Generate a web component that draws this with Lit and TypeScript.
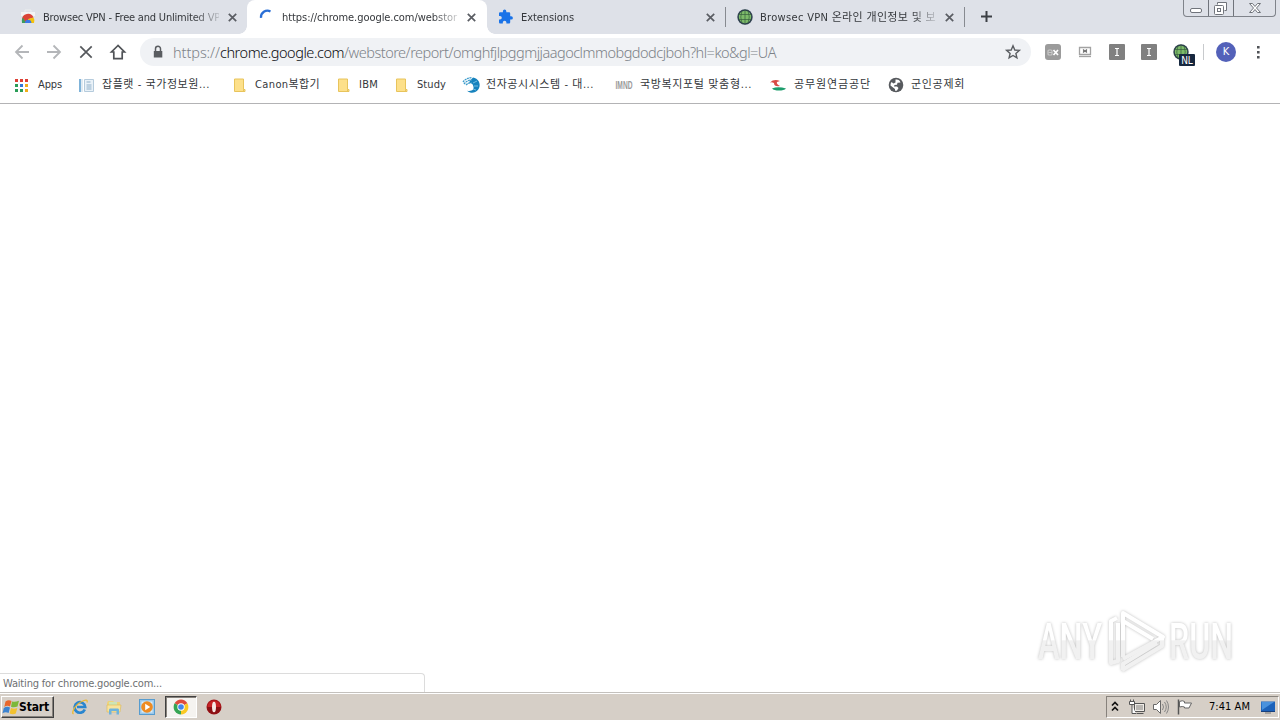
import { LitElement, css, html, svg } from 'lit'
import { customElement, property } from 'lit/decorators.js'

const glyphs: Record<string, unknown> = {
  store: svg`
    <path d="M1 3h14v4H1z" fill="#f3f4f5"/>
    <path d="M5 3V1h6v2" fill="none" stroke="#eceeef" stroke-width="1"/>
    <path d="M2 14V11a6 6 0 0 1 11.500-2.500L8 10.500V14z" fill="#db4437"/>
    <path d="M8 10l5.500-1.500A6 6 0 0 1 14 14H9z" fill="#f4c20d"/>
    <path d="M2 14l-.2-3A6 6 0 0 1 3 8.500L6 14z" fill="#3e9d5b"/>
    <path d="M5 14a3.200 3.200 0 0 1 6.400 0z" fill="#3b78e7"/>`,
  spinner: svg`<path d="M2 8.800A6.500 6.500 0 0 1 11.500 2.400" fill="none" stroke="#2a6fd6" stroke-width="2.300"/>`,
  puzzle: svg`<path fill="#1a73e8" d="M13.200 7.200h-1V4.500c0-.8-.6-1.300-1.300-1.300H8.300v-.9a1.700 1.700 0 0 0-3.400 0v.9H2.300C1.600 3.200 1 3.700 1 4.500V7h1a1.800 1.800 0 0 1 0 3.600H1v2.600c0 .7.600 1.300 1.300 1.300h2.500v-1a1.800 1.800 0 0 1 3.600 0v1h2.500c.7 0 1.300-.6 1.300-1.300v-2.600h1a1.700 1.700 0 0 0 0-3.400z"/>`,
  globe: svg`
    <circle cx="8" cy="8" r="7.700" fill="#2b3d4c"/>
    <circle cx="8" cy="8" r="6.200" fill="#7dbb69"/>
    <path d="M1.500 5.500h13M1.500 10.500h13M8 .5v15M5 1.500Q2.500 8 5 14.500M11 1.500Q13.500 8 11 14.500" fill="none" stroke="#37603f" stroke-width=".7"/>`,
  apps: svg`
    <path d="M0 2h3v3H0zM5 2h3v3H5zM10 2h3v3h-3z" fill="#dd4035"/>
    <path d="M0 7h3v3H0z" fill="#2a9d57"/><path d="M5 7h3v3H5z" fill="#3278d8"/><path d="M10 7h3v3h-3z" fill="#f1ad1a"/>
    <path d="M0 12h3v3H0zM5 12h3v3H5z" fill="#2a9d57"/><path d="M10 12h3v3h-3z" fill="#f1ad1a"/>`,
  doc: svg`
    <path d="M0 2h4v13H0z" fill="#7fb3d9"/><path d="M2 2h2v13H2z" fill="#dfeaf2"/>
    <path d="M5.500 2.500h9v12h-9z" fill="#eaf2f8" stroke="#b5cbdc"/>
    <path d="M7.500 5h4M7.500 8h5M7.500 10h5M7.500 12h5" stroke="#8fafc9"/>`,
  folder: svg`<path d="M2.500 2h9v10.500h1.500v2H2.500z" fill="#fde08a" stroke="#e8c45c"/><path d="M11.500 12.500v2" stroke="#e8c45c"/>`,
  swirl: svg`
    <path d="M10 .5a7.600 7.600 0 1 1-6 13.200c5 1 7-1.200 6.500-3.700S9 6 7 6 7.500 3 10 .5z" fill="#1682bd"/>
    <path d="M0 5q3-4 9-4.500M1 7q3-4 8-4M3 8q3-3 6-2" fill="none" stroke="#3d9ccc" stroke-width="1.300" stroke-dasharray="2 .6"/>
    <path d="M10 6l4-2M11 9l4 0M10 12l3 1" stroke="#8bcbe8" stroke-width=".8"/>`,
  imnd: svg`<text x="-1.500" y="12" font-family="Liberation Sans" font-weight="700" font-size="11" textLength="17" lengthAdjust="spacingAndGlyphs" fill="#9a9a9a">IMND</text>`,
  pension: svg`
    <path d="M-1 5.500q4-4 10-1.500l-3 1q-1 2 3 4-6 1-6-3-2-1-4-.5z" fill="#d94a45"/>
    <path d="M1 11.500q6-2.500 14 0-2 2-7 2t-7-2z" fill="#1d9d6c"/>`,
  earth: svg`
    <circle cx="8" cy="8" r="7.300" fill="#575a5e"/>
    <path d="M7.500 2.500q4-.5 5 3l-3 .2-.5 2-2.500.3-.5 1.500H9l1.500 1.500L9 13.500q-1 .4-2 0V12L2.500 8.500q-.2-2 1-3.500l2 1.500 2-1z" fill="#fff"/>`,
  back: svg`<path d="M15 8H2M8.500 1.500L2 8l6.500 6.500" fill="none" stroke="#b4b6b9" stroke-width="1.800"/>`,
  forward: svg`<path d="M1 8h13M7.500 1.500L14 8l-6.500 6.500" fill="none" stroke="#b4b6b9" stroke-width="1.800"/>`,
  stop: svg`<path d="M2.300 2.300l11.400 11.400M13.700 2.300L2.300 13.700" stroke="#55585c" stroke-width="1.700"/>`,
  home: svg`<path d="M8 1.500L1.500 8h2.300v6.700h8.400V8h2.300z" fill="none" stroke="#505357" stroke-width="1.700"/>`,
  lock: svg`<path d="M3.800 7h8.500v6.500H3.800z" fill="#5a5d61"/><path d="M5.500 7V4.800a2.500 2.500 0 0 1 5 0V7" fill="none" stroke="#5a5d61" stroke-width="1.500"/>`,
  star: svg`<path d="M8 1.800l1.800 4.200 4.600.4-3.500 3 1 4.500L8 11.500l-3.900 2.400 1-4.500-3.500-3 4.600-.4z" fill="none" stroke="#5a5d61" stroke-width="1.400"/>`,
  ox: svg`
    <rect width="16" height="16" rx="3" fill="#9b9b9b"/>
    <rect x="3" y="6" width="4" height="5" rx="1" fill="none" stroke="#c9c9c9" stroke-width="1.200"/>
    <path d="M3.500 8.500H7" stroke="#c9c9c9"/>
    <path d="M8.500 6l4.500 5M13 6l-4.500 5" stroke="#fff" stroke-width="1.700"/>`,
  screen: svg`
    <path d="M2.500 3.500h11v7h-11z" fill="#fff" stroke="#a2a2a2" stroke-width="1.300"/>
    <path d="M6 5.500l4 3M10 5.500l-4 3M6 7h4" stroke="#777" stroke-width="1.200"/><path d="M2 12.500h12" stroke="#a2a2a2" stroke-width="1.300"/>`,
  ibeam: svg`<rect width="16" height="16" rx="1" fill="#808080"/><path d="M6 4.500h4M6 11.500h4M8 4.500v7" stroke="#fff" stroke-width="1.200"/>`,
  dots: svg`<path d="M7 2h2.600v2.600H7zM7 7h2.600v2.600H7zM7 12h2.600v2.600H7z" fill="#505357"/>`,
  flagwin: svg`
    <path d="M2.500 2.500q3-2 6-.5L7 7.500Q4 6 1.300 8z" fill="#e9672c"/>
    <path d="M9 2.500q3 1 7-.7L14.500 7.500q-3.500 1.500-6.500.3z" fill="#7db83a"/>
    <path d="M.8 9q3-2 6.200-.5l-1.400 5.500q-3-1.400-6.100.2z" fill="#3c83d0"/>
    <path d="M8 9q3 1.500 6.300 0l-1.500 5.500Q10 16 6.600 14.500z" fill="#f3c230"/>`,
  ie: svg`
    <path d="M12.800 10.500A5.300 5.300 0 1 1 13.200 8H5" fill="none" stroke="#2a86cf" stroke-width="2.700"/>
    <path d="M1.500 15q-2-1 1-6T12 1.500q4-1.500 3 2" fill="none" stroke="#edb92f" stroke-width="1.300"/>`,
  explorer: svg`
    <path d="M1 4l1-2h5l1 1h6v10H1z" fill="#efd27a"/><path d="M3 3h8v4H3z" fill="#cde5b5"/>
    <path d="M1 6h14l-1 7H1z" fill="#f8e39c" stroke="#dcb956" stroke-width=".6"/>
    <path d="M3 15.500V11q0-1.500 1-1.500h8q1 0 1 1.500v4.500h-2.500V12h-5v3.500z" fill="#6eb3dc"/>`,
  player: svg`
    <rect x=".5" y=".5" width="15" height="15" fill="#9bc8ea" stroke="#579ccf"/>
    <rect x="2.500" y="2.500" width="11" height="11" fill="#d9edfa"/>
    <circle cx="8" cy="8" r="5.800" fill="#ee8b22"/><path d="M6.200 4.800v6.400L11.200 8z" fill="#fff"/>`,
  chrome: svg`
    <path d="M8 8L1.600 4.300A7.400 7.400 0 0 1 14.400 4.300z" fill="#df4b3c"/>
    <path d="M8 8l6.400-3.700A7.400 7.400 0 0 1 8 15.400z" fill="#fac923"/>
    <path d="M8 8v7.400A7.400 7.400 0 0 1 1.600 4.300z" fill="#35a453"/>
    <circle cx="8" cy="8" r="3.700" fill="#fff"/><circle cx="8" cy="8" r="2.800" fill="#4386ec"/>`,
  opera: svg`
    <circle cx="8" cy="8" r="7.500" fill="#a5161a"/><circle cx="8" cy="8" r="6.300" fill="#c62326"/>
    <path d="M1 8a7 7 0 0 0 14 0z" fill="#8b1014"/><ellipse cx="8" cy="8" rx="2" ry="5.300" fill="#f5e9e5"/>`,
  chevrons: svg`<path d="M5 6.500l3-3 3 3M5 11.500l3-3 3 3" fill="none" stroke="#111" stroke-width="1.700"/>`,
  network: svg`
    <path d="M5.500 4.500h10v8h-10zM7.500 14.500h7" fill="#efece7" stroke="#555"/>
    <path d="M7 6h7v5H7z" fill="#b9b6b2"/>
    <path d="M.5 2.500h5v3h-5zM1.500.5v2M4.500.5v2M3 6v8.500h4" fill="#fff" stroke="#555"/>`,
  speaker: svg`
    <path d="M.5 5.500h3l4-4v13l-4-4h-3z" fill="#fff" stroke="#686868"/>
    <path d="M9.500 5q2 3 0 6M11.500 3q3.500 5 0 10M13.500 1.500q4 6.500 0 13" fill="none" stroke="#858585"/>`,
  flag: svg`<path d="M1.500.5v15" stroke="#555" stroke-width="1.500"/><path d="M2.500 2.500q3-1.500 5 0v1.500h7l-2.500 5h-4.500V8q-2-1-5 0z" fill="#fff" stroke="#666"/>`,
  desktop: svg`
    <path d="M1 2.500h14v9.500H1z" fill="#1c62ba"/><path d="M1.500 3H14L2 11z" fill="#4a92dd"/>
    <path d="M1 12h14v1H1z" fill="#173f7c"/><path d="M5 14h6" stroke="#777"/>`
}

@customElement('ui-glyph')
export class UiGlyph extends LitElement {
  static styles = css`
    :host {
      display: block;
      flex: none;
      width: 16px;
      height: 16px;
    }
    .glyph {
      display: block;
      width: 100%;
      height: 100%;
      overflow: visible;
    }
  `

  @property() name = ''

  render () {
    return html`<svg class="glyph" viewBox="0 0 16 16">${glyphs[this.name]}</svg>`
  }
}

// Single line label whose tracking is adjusted so that it fills `length` pixels
@customElement('fit-label')
export class FitLabel extends LitElement {
  static styles = css`
    :host {
      display: block;
      flex: none;
      white-space: pre;
    }
    .text {
      display: inline-block;
    }
  `

  @property() text = ''
  @property({ type: Number }) length = 0

  firstUpdated () {
    const span = this.renderRoot.querySelector('.text') as HTMLElement
    const natural = span.getBoundingClientRect().width
    const spacing = (this.length - natural) / [...this.text].length
    span.style.letterSpacing = `${spacing}px`
  }

  render () {
    return html`<span class="text">${this.text}</span>`
  }
}

const tabs = [
  { icon: 'store', text: 'Browsec VPN - Free and Unlimited VP', length: 177, width: 239 },
  { icon: 'spinner', text: 'https://chrome.google.com/webstor', length: 175, width: 240, active: true },
  { icon: 'puzzle', text: 'Extensions', length: 53, width: 239, line: true },
  { icon: 'globe', text: 'Browsec VPN 온라인 개인정보 및 보', length: 176, width: 239, line: true }
]

const bookmarks = [
  { icon: 'apps', text: 'Apps', length: 24, width: 64 },
  { icon: 'doc', text: '잡플랫 - 국가정보원...', length: 108, width: 153 },
  { icon: 'folder', text: 'Canon복합기', length: 65, width: 104 },
  { icon: 'folder', text: 'IBM', length: 19, width: 58 },
  { icon: 'folder', text: 'Study', length: 29, width: 69 },
  { icon: 'swirl', text: '전자공시시스템 - 대...', length: 108, width: 154 },
  { icon: 'imnd', text: '국방복지포털 맞춤형...', length: 112, width: 154 },
  { icon: 'pension', text: '공무원연금공단', length: 77, width: 117 },
  { icon: 'earth', text: '군인공제회', length: 54, width: 90 }
]

@customElement('app-root')
export class AppRoot extends LitElement {
  static styles = css`
    :host {
      display: flex;
      flex-direction: column;
      position: relative;
      width: 1280px;
      height: 720px;
      overflow: hidden;
      background: #fff;
      color: #34373b;
      font: 11px/16px "DejaVu Sans Condensed", "Noto Sans CJK KR", sans-serif;
    }
    .strip {
      display: flex;
      height: 34px;
      padding-left: 8px;
      background: #dee1e8;
    }
    .tab {
      display: flex;
      align-items: center;
      box-sizing: border-box;
      flex: none;
      height: 34px;
      padding-left: 12px;
      position: relative;
    }
    .tab.line {
      padding-left: 11px;
    }
    .tab.line::after {
      content: '';
      width: 1px;
      height: 20px;
      margin-left: auto;
      background: #878a90;
    }
    .tab.active {
      background: #fff;
      border-radius: 8px 8px 0 0;
    }
    .tab.active::before,
    .tab.active::after {
      content: '';
      position: absolute;
      bottom: 0;
      width: 8px;
      height: 8px;
    }
    .tab.active::before {
      left: -8px;
      background: radial-gradient(circle at 0 0, transparent 7.5px, #fff 8px);
    }
    .tab.active::after {
      right: -8px;
      background: radial-gradient(circle at 100% 0, transparent 7.5px, #fff 8px);
    }
    .title {
      width: 176px;
      margin-left: 7px;
      padding-top: 1px;
      overflow: hidden;
      -webkit-mask-image: linear-gradient(90deg, #000 150px, transparent 182px);
      mask-image: linear-gradient(90deg, #000 150px, transparent 182px);
    }
    .close {
      width: 9px;
      height: 9px;
      margin-left: 8.5px;
      flex: none;
    }
    .plus {
      width: 13px;
      height: 13px;
      margin: 10px 0 0 15px;
    }
    .controls {
      display: flex;
      box-sizing: border-box;
      width: 93px;
      height: 17px;
      margin-left: auto;
      margin-right: 4px;
      border: 1px solid #7f838a;
      border-top: 0;
      border-radius: 0 0 4px 4px;
    }
    .toolbar {
      display: flex;
      align-items: center;
      height: 36px;
    }
    .nav {
      display: flex;
      gap: 16px;
      padding-left: 14px;
    }
    .omnibox {
      display: flex;
      align-items: center;
      box-sizing: border-box;
      width: 891px;
      height: 28px;
      margin-left: 14px;
      padding: 0 10px;
      border-radius: 14px;
      background: #f0f2f5;
    }
    .url {
      display: flex;
      flex: 1;
      margin-left: 7px;
      padding-bottom: 1px;
      color: #7d8288;
      font-family: "Noto Sans", sans-serif;
      font-weight: 300;
      font-size: 14.5px;
      line-height: 20px;
    }
    .host {
      color: #0c0d10;
    }
    .extensions {
      display: flex;
      align-items: center;
      gap: 16px;
      margin-left: 14px;
    }
    .vpn {
      position: relative;
    }
    .badge {
      position: absolute;
      left: 6px;
      top: 10px;
      width: 16px;
      height: 12px;
      border-radius: 1px;
      background: #17283f;
      color: #fff;
      font-size: 10px;
      line-height: 13px;
      text-align: center;
    }
    .rule {
      width: 1px;
      height: 16px;
      margin-left: 14px;
      background: #c8cacd;
    }
    .avatar {
      width: 20px;
      height: 20px;
      margin: 0 14px 0 12px;
      border-radius: 50%;
      background: #5361b9;
      color: #fff;
      line-height: 20px;
      text-align: center;
    }
    .bookmarks {
      display: flex;
      align-items: center;
      box-sizing: border-box;
      height: 34px;
      padding: 0 0 3px 15px;
      border-bottom: 1px solid #b3b3b5;
    }
    .bookmark {
      display: flex;
      align-items: center;
      gap: 7px;
      flex: none;
    }
    .page {
      display: flex;
      align-items: flex-end;
      flex: 1;
    }
    .status {
      box-sizing: border-box;
      width: 425px;
      height: 19px;
      padding: 2px 3px;
      border: 1px solid #dcdcdc;
      border-left: 0;
      border-bottom: 0;
      border-radius: 0 4px 0 0;
      color: #6e7072;
    }
    .watermark {
      position: absolute;
      left: 1030px;
      top: 605px;
      width: 240px;
      height: 80px;
      overflow: visible;
      filter: drop-shadow(0 0 1.5px rgba(0, 0, 0, 0.26));
    }
    .taskbar {
      display: flex;
      align-items: center;
      box-sizing: border-box;
      height: 28px;
      padding: 3px 1px 2px 1px;
      border-top: 1px solid #c4c1bd;
      box-shadow: inset 0 1px #fff;
      background: #d6cfc7;
      color: #000;
    }
    .start {
      display: flex;
      align-items: center;
      box-sizing: border-box;
      width: 53px;
      height: 22px;
      padding-left: 1px;
      border: 1px solid;
      border-color: #fff #404040 #404040 #fff;
      box-shadow: inset -1px -1px #87827c;
      font: bold 12px/18px "DejaVu Sans Condensed", sans-serif;
    }
    .launch {
      display: flex;
      align-items: center;
      margin-left: 18px;
      gap: 17.5px;
    }
    .pressed {
      display: flex;
      align-items: center;
      justify-content: center;
      box-sizing: border-box;
      width: 32px;
      height: 22px;
      margin: 0 -8px 0 -8px;
      border: 1px solid;
      border-color: #404040 #fff #fff #404040;
      box-shadow: inset 1px 1px #87827c;
      background: #f5f3f0;
    }
    .tray {
      display: flex;
      align-items: center;
      box-sizing: border-box;
      width: 173px;
      height: 22px;
      margin-left: auto;
      border: 1px solid;
      border-color: #87827c #fff #fff #87827c;
    }
    .tray > ui-glyph {
      margin-right: 8px;
    }
    .tray > .more {
      margin-right: 6px;
    }
    .tray > .last {
      margin: 0 0 0 10px;
    }
    .clock {
      margin-left: 8px;
    }
  `

  _renderTab (tab: any) {
    return html`
      <div
        class="tab ${tab.active ? 'active' : ''} ${tab.line ? 'line' : ''}"
        style="width: ${tab.width}px"
      >
        <ui-glyph name=${tab.icon}></ui-glyph>
        <div class="title">
          <fit-label text=${tab.text} length=${tab.length}></fit-label>
        </div>
        <svg class="close" viewBox="0 0 9 9">
          <path d="M.8.8l7.400 7.400M8.200.8L.8 8.200" stroke="#5a5d63" stroke-width="1.700"/>
        </svg>
      </div>
    `
  }

  _renderBookmark (item: any) {
    return html`
      <div class="bookmark" style="width: ${item.width}px">
        <ui-glyph name=${item.icon}></ui-glyph>
        <fit-label text=${item.text} length=${item.length}></fit-label>
      </div>
    `
  }

  _renderWatermark () {
    return html`
      <svg class="watermark" viewBox="0 0 240 80">
        <defs>
          <linearGradient id="tone" gradientUnits="userSpaceOnUse" x1="0" y1="0" x2="0" y2="72">
            <stop offset=".48" stop-color="#fff"/>
            <stop offset=".5" stop-color="#f1f1f1"/>
          </linearGradient>
        </defs>
        <g fill="url(#tone)" font-family="Roboto" font-weight="500" font-size="50">
          <text x="8" y="54" textLength="64" lengthAdjust="spacingAndGlyphs">ANY</text>
          <text x="139" y="54" textLength="64" lengthAdjust="spacingAndGlyphs">RUN</text>
        </g>
        <g fill="none" stroke="url(#tone)" stroke-width="4" stroke-linejoin="round">
          <path d="M93 52V8l40 24-40 22"/>
          <path d="M87 13l-6 3v42l7-2V18M92 65l40-24v-8M93 65v-6l34-21M93 16l30 18"/>
        </g>
      </svg>
    `
  }

  render () {
    return html`
      <div class="strip">
        ${tabs.map((tab) => this._renderTab(tab))}
        <svg class="plus" viewBox="0 0 13 13">
          <path d="M6.500 1v11M1 6.500h11" stroke="#3c4045" stroke-width="2"/>
        </svg>
        <svg class="controls" viewBox="0 0 91 16">
          <g fill="none" stroke="#70747b">
            <path d="M24.500 0v16M49.500 0v16"/>
            <rect x="6.500" y="8.500" width="11" height="4" rx="1.500" fill="#fff"/>
            <path d="M33.500 4.500v-2h9v8h-2" fill="#fff"/>
            <rect x="30.500" y="5.500" width="9" height="9" rx="1" fill="#fff"/>
            <rect x="33.500" y="8.500" width="3" height="3"/>
            <path d="M65.500 3.500h3l2.500 3 2.500-3h3l-4 4.500 4 4.500h-3L71 9.500l-2.500 3h-3l4-4.500z" fill="#fff"/>
          </g>
        </svg>
      </div>
      <div class="toolbar">
        <div class="nav">
          <ui-glyph name="back"></ui-glyph>
          <ui-glyph name="forward"></ui-glyph>
          <ui-glyph name="stop"></ui-glyph>
          <ui-glyph name="home"></ui-glyph>
        </div>
        <div class="omnibox">
          <ui-glyph name="lock"></ui-glyph>
          <div class="url">
            <fit-label text="https://" length="47"></fit-label>
            <fit-label class="host" text="chrome.google.com" length="124"></fit-label>
            <fit-label
              text="/webstore/report/omghfjlpggmjjaagoclmmobgdodcjboh?hl=ko&gl=UA"
              length="432"
            ></fit-label>
          </div>
          <ui-glyph name="star"></ui-glyph>
        </div>
        <div class="extensions">
          <ui-glyph name="ox"></ui-glyph>
          <ui-glyph name="screen"></ui-glyph>
          <ui-glyph name="ibeam"></ui-glyph>
          <ui-glyph name="ibeam"></ui-glyph>
          <div class="vpn">
            <ui-glyph name="globe"></ui-glyph>
            <span class="badge">NL</span>
          </div>
        </div>
        <div class="rule"></div>
        <div class="avatar">K</div>
        <ui-glyph name="dots"></ui-glyph>
      </div>
      <div class="bookmarks">
        ${bookmarks.map((item) => this._renderBookmark(item))}
      </div>
      <div class="page">
        <div class="status">
          <fit-label text="Waiting for chrome.google.com..." length="159"></fit-label>
        </div>
      </div>
      ${this._renderWatermark()}
      <div class="taskbar">
        <div class="start">
          <ui-glyph name="flagwin"></ui-glyph>
          <fit-label text="Start" length="30"></fit-label>
        </div>
        <div class="launch">
          <ui-glyph name="ie"></ui-glyph>
          <ui-glyph name="explorer"></ui-glyph>
          <ui-glyph name="player"></ui-glyph>
          <div class="pressed"><ui-glyph name="chrome"></ui-glyph></div>
          <ui-glyph name="opera"></ui-glyph>
        </div>
        <div class="tray">
          <ui-glyph class="more" name="chevrons"></ui-glyph>
          <ui-glyph name="network"></ui-glyph>
          <ui-glyph name="speaker"></ui-glyph>
          <ui-glyph name="flag"></ui-glyph>
          <fit-label class="clock" text="7:41 AM" length="41"></fit-label>
          <ui-glyph class="last" name="desktop"></ui-glyph>
        </div>
      </div>
    `
  }
}
